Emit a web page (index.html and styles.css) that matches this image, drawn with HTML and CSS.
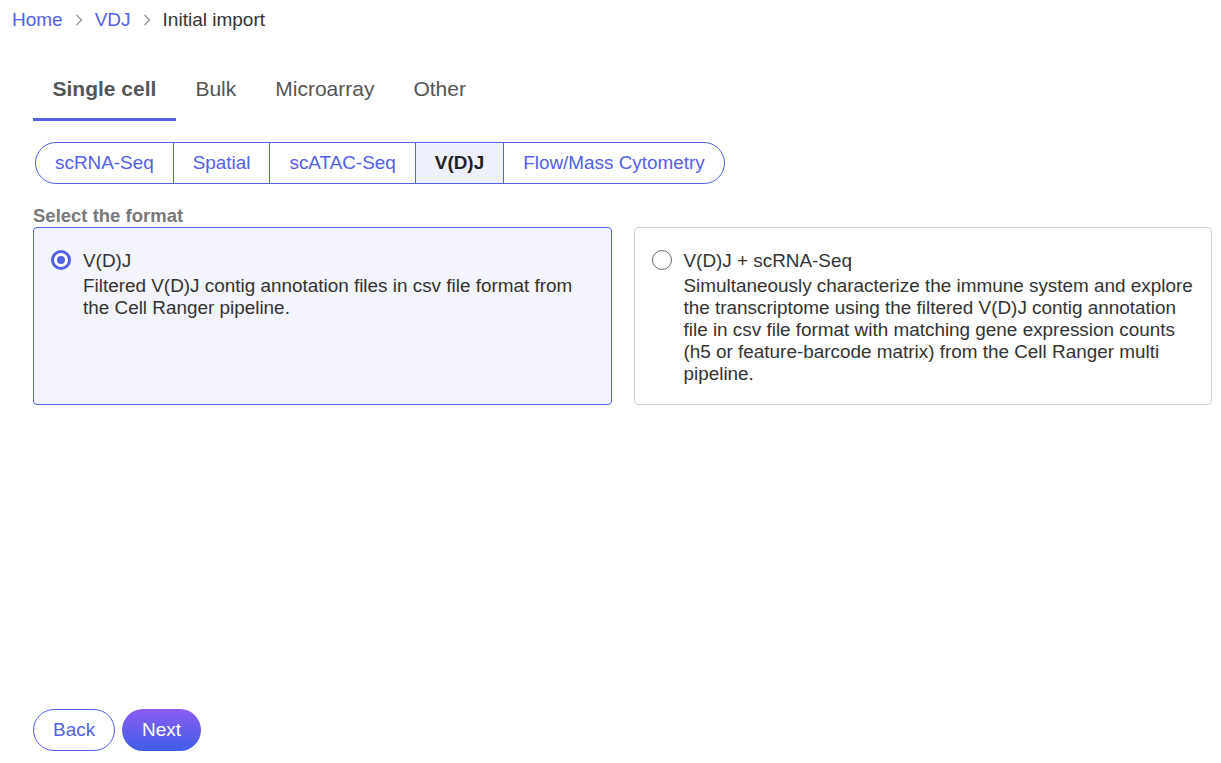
FILE: index.html
```html
<!DOCTYPE html>
<html>
<head>
<meta charset="utf-8">
<link rel="stylesheet" href="styles.css">
</head>
<body>
<div class="page">
  <nav class="crumbs">
    <a class="crumb-link">Home</a>
    <svg class="chev" width="10" height="14" viewBox="0 0 10 14"><path d="M2.5 2 L7.5 7 L2.5 12" fill="none" stroke="#9a9a9a" stroke-width="1.4"/></svg>
    <a class="crumb-link">VDJ</a>
    <svg class="chev" width="10" height="14" viewBox="0 0 10 14"><path d="M2.5 2 L7.5 7 L2.5 12" fill="none" stroke="#9a9a9a" stroke-width="1.4"/></svg>
    <span class="crumb-current">Initial import</span>
  </nav>

  <main class="main">
    <div class="tabs">
      <div class="tab active">Single cell</div>
      <div class="tab">Bulk</div>
      <div class="tab">Microarray</div>
      <div class="tab">Other</div>
    </div>

    <div class="segments">
      <div class="seg">scRNA-Seq</div>
      <div class="seg">Spatial</div>
      <div class="seg">scATAC-Seq</div>
      <div class="seg selected">V(D)J</div>
      <div class="seg">Flow/Mass Cytometry</div>
    </div>

    <div class="label">Select the format</div>
    <div class="cards">
      <div class="card checked">
        <span class="radio on"></span>
        <div class="card-text">
          <div class="card-title">V(D)J</div>
          <div class="card-desc">Filtered V(D)J contig annotation files in csv file format from the Cell Ranger pipeline.</div>
        </div>
      </div>
      <div class="card">
        <span class="radio"></span>
        <div class="card-text">
          <div class="card-title">V(D)J + scRNA-Seq</div>
          <div class="card-desc">Simultaneously characterize the immune system and explore the transcriptome using the filtered V(D)J contig annotation file in csv file format with matching gene expression counts (h5 or feature-barcode matrix) from the Cell Ranger multi pipeline.</div>
        </div>
      </div>
    </div>
  </main>

  <footer class="actions">
    <button class="btn back">Back</button>
    <button class="btn next">Next</button>
  </footer>
</div>
</body>
</html>
```

FILE: styles.css
```css
* { box-sizing: border-box; }
html, body { margin: 0; padding: 0; background: #fff; }
body {
  font-family: "Liberation Sans", Arial, sans-serif;
  color: #333;
}
.page {
  width: 1221px;
  height: 763px;
  display: flex;
  flex-direction: column;
}
.crumbs {
  display: flex;
  align-items: center;
  gap: 11px;
  padding: 9px 0 0 12px;
  font-size: 19px;
  height: 31px;
}
.crumb-link { color: #5360e8; }
.crumb-current { color: #333; }
.chev { display: block; }

.main {
  padding: 0 9px 0 33px;
  flex: 1;
}
.tabs {
  display: flex;
  margin-top: 39px;
}
.tab {
  font-size: 21px;
  color: #555;
  padding: 7px 19.5px 17px;
  border-bottom: 3px solid transparent;
}
.tab.active {
  font-weight: bold;
  border-bottom-color: #5360e8;
}
.segments {
  display: inline-flex;
  margin: 21px 0 0 2px;
  border: 1px solid #5360e8;
  border-radius: 22px;
  overflow: hidden;
  height: 42px;
}
.seg {
  font-size: 18.9px;
  color: #5360e8;
  padding: 0 19px;
  display: flex;
  align-items: center;
  border-left: 1px solid #5360e8;
}
.seg:first-child { border-left: none; }
.seg.selected {
  background: #eef0fb;
  color: #222;
  font-weight: bold;
}
.label {
  margin-top: 21px;
  font-size: 18.5px;
  font-weight: bold;
  color: #787878;
  line-height: 21px;
}
.cards {
  display: grid;
  grid-template-columns: 1fr 1fr;
  gap: 22px;
  margin-top: 1px;
}
.card {
  display: flex;
  gap: 12px;
  align-items: flex-start;
  height: 178px;
  border: 1px solid #d0d0d0;
  border-radius: 4px;
  padding: 22px 10px 16px 17px;
  font-size: 18.9px;
  line-height: 22px;
  color: #333;
}
.card.checked {
  background: #f3f4fc;
  border-color: #5360e8;
}
.radio {
  flex: none;
  width: 20px;
  height: 20px;
  border-radius: 50%;
  border: 1.5px solid #666;
  margin-top: 0;
  position: relative;
}
.radio.on {
  border: 3px solid #5360e8;
  background: #fff;
}
.radio.on::after {
  content: "";
  position: absolute;
  left: 3px;
  top: 3px;
  width: 8px;
  height: 8px;
  border-radius: 50%;
  background: #5360e8;
}
.card-title { margin-bottom: 3px; }

.actions {
  display: flex;
  gap: 7px;
  padding: 0 0 12px 33px;
}
.btn {
  font-family: "Liberation Sans", Arial, sans-serif;
  font-size: 19px;
  height: 42px;
  border-radius: 21px;
  padding: 0 19px;
  cursor: pointer;
}
.btn.back {
  background: #fff;
  color: #5360e8;
  border: 1px solid #5360e8;
  width: 82px;
}
.btn.next {
  border: none;
  color: #fff;
  width: 79px;
  background: linear-gradient(180deg, #8c5cf2 0%, #3f5ee8 100%);
}
```
